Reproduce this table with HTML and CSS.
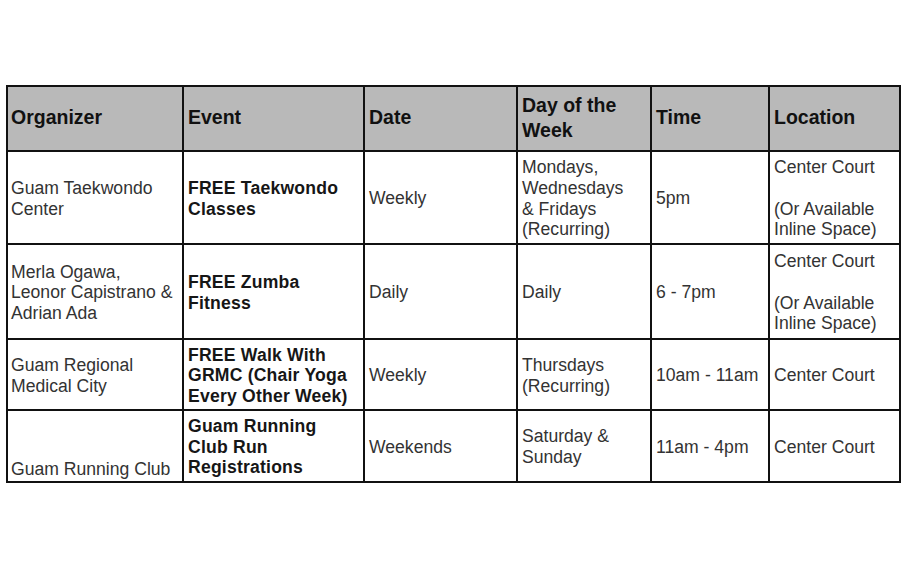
FILE: index.html
```html
<!DOCTYPE html>
<html>
<head>
<meta charset="utf-8">
<link rel="stylesheet" href="styles.css">
</head>
<body>
<table class="schedule">
  <colgroup>
    <col class="c-org">
    <col class="c-event">
    <col class="c-date">
    <col class="c-day">
    <col class="c-time">
    <col class="c-loc">
  </colgroup>
  <thead>
    <tr class="r-head">
      <th class="first">Organizer</th>
      <th>Event</th>
      <th>Date</th>
      <th>Day of the<br>Week</th>
      <th>Time</th>
      <th>Location</th>
    </tr>
  </thead>
  <tbody>
    <tr class="r1">
      <td class="first">Guam Taekwondo<br>Center</td>
      <td class="event">FREE Taekwondo<br>Classes</td>
      <td>Weekly</td>
      <td>Mondays,<br>Wednesdays<br>&amp; Fridays<br>(Recurring)</td>
      <td>5pm</td>
      <td>Center Court<br><br>(Or Available<br>Inline Space)</td>
    </tr>
    <tr class="r2">
      <td class="first">Merla Ogawa,<br>Leonor Capistrano &amp;<br>Adrian Ada</td>
      <td class="event">FREE Zumba<br>Fitness</td>
      <td>Daily</td>
      <td>Daily</td>
      <td>6 - 7pm</td>
      <td>Center Court<br><br>(Or Available<br>Inline Space)</td>
    </tr>
    <tr class="r3">
      <td class="first">Guam Regional<br>Medical City</td>
      <td class="event">FREE Walk With<br>GRMC (Chair Yoga<br>Every Other Week)</td>
      <td>Weekly</td>
      <td>Thursdays<br>(Recurring)</td>
      <td>10am - 11am</td>
      <td>Center Court</td>
    </tr>
    <tr class="r4">
      <td class="first bottom">Guam Running Club</td>
      <td class="event">Guam Running<br>Club Run<br>Registrations</td>
      <td>Weekends</td>
      <td>Saturday &amp;<br>Sunday</td>
      <td>11am - 4pm</td>
      <td>Center Court</td>
    </tr>
  </tbody>
</table>
</body>
</html>
```

FILE: styles.css
```css
html, body {
  margin: 0;
  padding: 0;
  background: #ffffff;
}

body {
  padding: 85px 0 0 6px;
  font-family: "Liberation Sans", Arial, sans-serif;
}

.schedule {
  border-collapse: collapse;
  table-layout: fixed;
  width: 893px;
}

.c-org { width: 176px; }
.c-event { width: 181px; }
.c-date { width: 153px; }
.c-day { width: 134px; }
.c-time { width: 118px; }
.c-loc { width: 131px; }

.schedule th,
.schedule td {
  border: 2px solid #111111;
  padding: 2px 2px 0 4px;
  vertical-align: middle;
  text-align: left;
  white-space: nowrap;
  overflow: hidden;
}

.schedule th.first,
.schedule td.first {
  padding-left: 3px;
}

.schedule th {
  background: #b9b9b9;
  color: #111111;
  font-weight: bold;
  font-size: 19.5px;
  line-height: 25px;
  padding-top: 0;
  padding-bottom: 2px;
}

.schedule td {
  color: #333333;
  font-size: 17.6px;
  line-height: 20.6px;
}

.schedule td.event {
  color: #161616;
  font-weight: bold;
  letter-spacing: 0.2px;
}

.schedule td.bottom {
  vertical-align: bottom;
  padding-bottom: 1px;
}

.r-head { height: 65px; }
.r1 { height: 93px; }
.r2 { height: 95px; }
.r3 { height: 71px; }
.r4 { height: 72px; }
```
